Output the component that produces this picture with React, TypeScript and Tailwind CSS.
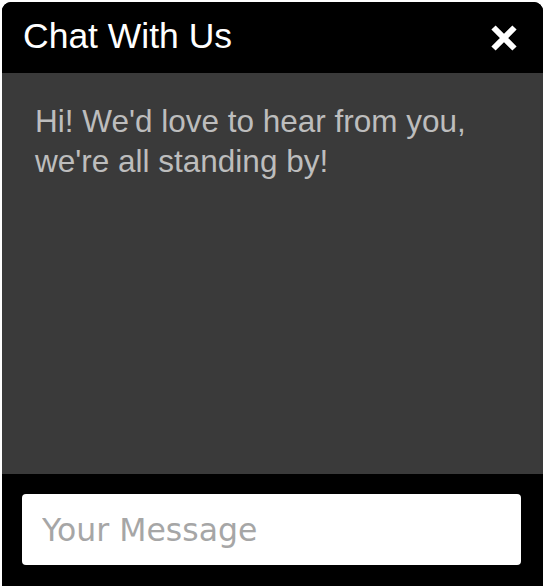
import React from "react";

export default function App() {
  return (
    <div className="w-[546px] h-[586px] bg-white pt-[2px] px-[2px] pr-[3px] overflow-hidden">
      <div className="w-[541px] h-[584px] flex flex-col rounded-t-[9px] overflow-hidden bg-black">
        <div className="h-[71px] shrink-0 flex items-start justify-between pl-[21px] pr-[25px] pt-[14px] bg-black">
          <span
            className="text-white text-[35.5px] leading-[40px]"
            style={{ fontFamily: '"Liberation Sans", Arial, sans-serif' }}
          >
            Chat With Us
          </span>
          <svg width="28" height="28" viewBox="0 0 28 28" className="mt-[8px]">
            <path d="M3.5 3.5 L24.5 24.5 M24.5 3.5 L3.5 24.5" stroke="white" strokeWidth="6" strokeLinecap="butt" fill="none" />
          </svg>
        </div>
        <div className="h-[401px] shrink-0 bg-[#3a3a3a] pl-[33px] pt-[28px]">
          <p
            className="text-[#bdbdbd] text-[31.5px] leading-[40px]"
            style={{ fontFamily: '"Liberation Sans", Arial, sans-serif' }}
          >
            Hi! We'd love to hear from you,
            <br />
            we're all standing by!
          </p>
        </div>
        <div className="flex-1 bg-black px-[20px] pt-[20px]">
          <input
            type="text"
            placeholder="Your Message"
            className="w-[499px] h-[71px] bg-white rounded-[4px] pl-[20px] text-[31.5px] text-[#333] placeholder:text-[#a6a6a6] outline-none"
            style={{ fontFamily: '"DejaVu Sans", Verdana, sans-serif' }}
          />
        </div>
      </div>
    </div>
  );
}
